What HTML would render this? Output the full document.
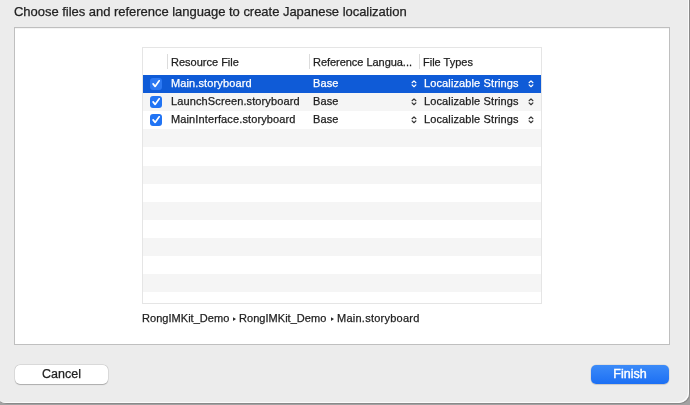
<!DOCTYPE html>
<html><head><meta charset="utf-8">
<style>
*{margin:0;padding:0;box-sizing:border-box}
html,body{width:690px;height:405px;overflow:hidden;background:#a2a2a2;font-family:"Liberation Sans",sans-serif}
.t{position:absolute;white-space:nowrap;line-height:1;will-change:transform;-webkit-text-stroke:0.25px currentColor}
#win{position:absolute;left:-4px;top:-10px;width:693px;height:413px;background:#ececec;border-radius:0 0 10px 10px;box-shadow:inset -1px -1px 0 #fbfbfb,1px 1px 0 #8a8a8a}
#title{left:13.9px;top:5.4px;font-size:13px;color:#222;letter-spacing:-0.03px}
#box{position:absolute;left:14px;top:27px;width:656px;height:318px;background:#fff;border:1px solid #bfbfbf;box-shadow:inset 0 1px 0 #f4f4f4}
#tbl{position:absolute;left:142px;top:47px;width:400px;height:257px;border:1px solid #e5e5e5;background:#fff;overflow:hidden}
.row{position:absolute;left:0;width:398px;height:18.1px}
.g{background:#f5f5f5}
.sel{background:#0f5bd7}
.sep{position:absolute;top:6px;width:1px;height:15px;background:#dcdcdc}
.hd{font-size:11px;color:#1e1e1e}
.cell{font-size:11px;color:#1c1c1c;letter-spacing:0.12px}
.sel .cell{color:#fff}
.cb{position:absolute;left:7px;top:3px;width:12px;height:12px;border-radius:3px;background:#2174f4}
.sel .cb{background:#2c78f2}
.cb svg{position:absolute;left:0;top:0}
.st{position:absolute;top:4px}
.pth{top:313px;font-size:11px;color:#222}
.btn{position:absolute;top:365px;height:19px;border-radius:5px}
#cancel{left:15px;width:93px;background:#fff;box-shadow:0 0 0 0.5px rgba(0,0,0,0.12),0 0.5px 1px rgba(0,0,0,0.22)}
#finish{left:591px;width:78px;background:linear-gradient(#3c8bf8,#1c6ff4);box-shadow:0 0 0 0.5px rgba(0,0,0,0.1),0 1px 1px rgba(0,0,0,0.1)}
.bt{position:absolute;left:0;right:0;top:3px;text-align:center;font-size:12.5px;line-height:1;will-change:transform;-webkit-text-stroke:0.25px currentColor}
</style></head><body>
<div id="win"></div>
<div class="t" id="title">Choose files and reference language to create Japanese localization</div>
<div id="box"></div>
<div id="tbl">
  <div class="sep" style="left:24px"></div>
  <div class="sep" style="left:166px"></div>
  <div class="sep" style="left:276px"></div>
  <div class="t hd" style="left:27.9px;top:9px">Resource File</div>
  <div class="t hd" style="left:169.5px;top:9px;letter-spacing:-0.04px">Reference Langua...</div>
  <div class="t hd" style="left:280px;top:9px">File Types</div>

  <div class="row sel" style="top:27px">
    <div class="cb"><svg width="12" height="12" viewBox="0 0 12 12"><path d="M3.1 5.9 L5.1 8.4 L9.2 2.8" fill="none" stroke="#fff" stroke-width="1.7" stroke-linecap="round" stroke-linejoin="round"/></svg></div>
    <div class="t cell" style="left:27.8px;top:3px">Main.storyboard</div>
    <div class="t cell" style="left:170px;top:3px">Base</div>
    <svg class="st" style="left:268px" width="6" height="9" viewBox="0 0 6 9"><path d="M1.1 3.7 L3 1.9 L4.9 3.7 M1.1 5.9 L3 7.7 L4.9 5.9" fill="none" stroke="#fff" stroke-width="1.2" stroke-linecap="round" stroke-linejoin="round"/></svg>
    <div class="t cell" style="left:280.6px;top:3px">Localizable Strings</div>
    <svg class="st" style="left:385px" width="6" height="9" viewBox="0 0 6 9"><path d="M1.1 3.7 L3 1.9 L4.9 3.7 M1.1 5.9 L3 7.7 L4.9 5.9" fill="none" stroke="#fff" stroke-width="1.2" stroke-linecap="round" stroke-linejoin="round"/></svg>
  </div>
  <div class="row g" style="top:45px">
    <div class="cb"><svg width="12" height="12" viewBox="0 0 12 12"><path d="M3.1 5.9 L5.1 8.4 L9.2 2.8" fill="none" stroke="#fff" stroke-width="1.7" stroke-linecap="round" stroke-linejoin="round"/></svg></div>
    <div class="t cell" style="left:27.8px;top:3px">LaunchScreen.storyboard</div>
    <div class="t cell" style="left:170px;top:3px">Base</div>
    <svg class="st" style="left:268px" width="6" height="9" viewBox="0 0 6 9"><path d="M1.1 3.7 L3 1.9 L4.9 3.7 M1.1 5.9 L3 7.7 L4.9 5.9" fill="none" stroke="#333" stroke-width="1.2" stroke-linecap="round" stroke-linejoin="round"/></svg>
    <div class="t cell" style="left:280.6px;top:3px">Localizable Strings</div>
    <svg class="st" style="left:385px" width="6" height="9" viewBox="0 0 6 9"><path d="M1.1 3.7 L3 1.9 L4.9 3.7 M1.1 5.9 L3 7.7 L4.9 5.9" fill="none" stroke="#333" stroke-width="1.2" stroke-linecap="round" stroke-linejoin="round"/></svg>
  </div>
  <div class="row" style="top:63px">
    <div class="cb"><svg width="12" height="12" viewBox="0 0 12 12"><path d="M3.1 5.9 L5.1 8.4 L9.2 2.8" fill="none" stroke="#fff" stroke-width="1.7" stroke-linecap="round" stroke-linejoin="round"/></svg></div>
    <div class="t cell" style="left:27.8px;top:3px">MainInterface.storyboard</div>
    <div class="t cell" style="left:170px;top:3px">Base</div>
    <svg class="st" style="left:268px" width="6" height="9" viewBox="0 0 6 9"><path d="M1.1 3.7 L3 1.9 L4.9 3.7 M1.1 5.9 L3 7.7 L4.9 5.9" fill="none" stroke="#333" stroke-width="1.2" stroke-linecap="round" stroke-linejoin="round"/></svg>
    <div class="t cell" style="left:280.6px;top:3px">Localizable Strings</div>
    <svg class="st" style="left:385px" width="6" height="9" viewBox="0 0 6 9"><path d="M1.1 3.7 L3 1.9 L4.9 3.7 M1.1 5.9 L3 7.7 L4.9 5.9" fill="none" stroke="#333" stroke-width="1.2" stroke-linecap="round" stroke-linejoin="round"/></svg>
  </div>
  <div class="row g" style="top:81.3px"></div>
  <div class="row g" style="top:117.5px"></div>
  <div class="row g" style="top:153.7px"></div>
  <div class="row g" style="top:189.9px"></div>
  <div class="row g" style="top:226.1px"></div>
</div>
<div class="t pth" style="left:141.8px;letter-spacing:0.04px">RongIMKit_Demo</div>
<svg style="position:absolute;left:232.4px;top:316.3px" width="5" height="6" viewBox="0 0 5 6"><path d="M1 1.3 L4 3.1 L1 4.9 Z" fill="#2a2a2a"/></svg>
<div class="t pth" style="left:239.2px;letter-spacing:0.04px">RongIMKit_Demo</div>
<svg style="position:absolute;left:330.2px;top:316.3px" width="5" height="6" viewBox="0 0 5 6"><path d="M1 1.3 L4 3.1 L1 4.9 Z" fill="#2a2a2a"/></svg>
<div class="t pth" style="left:336.6px;letter-spacing:0.25px">Main.storyboard</div>
<div class="btn" id="cancel"><div class="bt" style="color:#222">Cancel</div></div>
<div class="btn" id="finish"><div class="bt" style="color:#fff;-webkit-text-stroke:0.4px #fff">Finish</div></div>
</body></html>
